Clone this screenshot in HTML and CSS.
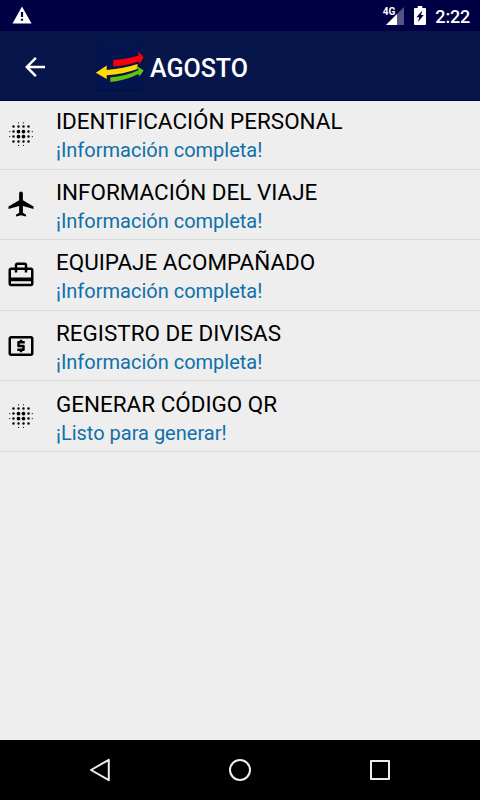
FILE: index.html
```html
<!DOCTYPE html>
<html lang="es">
<head>
    <meta charset="UTF-8">
    <meta name="viewport" content="width=device-width, initial-scale=1.0">
    <title>Agosto</title>
    <link rel="stylesheet" href="styles.css">
</head>
<body>
    <!-- Shared dotted icon -->
    <svg class="sprite" width="0" height="0">
        <symbol id="blur" viewBox="0 0 24 24">
            <g fill="none" stroke="#000" stroke-linecap="round">
                <path stroke-width="3" d="M10 10h0M14 10h0M10 14h0M14 14h0"/>
                <path stroke-width="2" d="M6 6h0M10 6h0M14 6h0M18 6h0M6 10h0M18 10h0M6 14h0M18 14h0M6 18h0M10 18h0M14 18h0M18 18h0"/>
                <path stroke-width="1" d="M10 3h0M14 3h0M3 10h0M3 14h0M21 10h0M21 14h0M10 21h0M14 21h0"/>
            </g>
        </symbol>
    </svg>

    <div class="screen">
        <div class="status-bar">
            <svg class="warning" width="20" height="18" viewBox="0 0 20 18">
                <path fill="#fff" d="M10 .5L19.5 17.5H.5z"/>
                <path fill="#000045" d="M8.9 6h2.2v5H8.9zM8.9 12.7h2.2v2.1H8.9z"/>
            </svg>
            <div class="status-right">
                <span class="network">4G</span>
                <svg class="signal" width="18" height="18" viewBox="0 0 18 18">
                    <path fill="#555386" d="M18 0v18H0z"/>
                    <path fill="#fff" d="M11 7v11H0z"/>
                </svg>
                <svg class="battery" width="12" height="19" viewBox="0 0 12 19">
                    <path fill="#fff" d="M3.7 0h4.6v2H11a1 1 0 0 1 1 1v15a1 1 0 0 1-1 1H1a1 1 0 0 1-1-1V3a1 1 0 0 1 1-1h2.7z"/>
                    <path fill="#000045" d="M8.3 4.6L7 9h2.8L4 16l1.2-4.8H2.4z"/>
                </svg>
                <span class="clock">2:22</span>
            </div>
        </div>

        <header class="app-bar">
            <svg class="back" width="30" height="30" viewBox="0 0 24 24">
                <path fill="#fff" d="M20 11H7.83l5.59-5.59L12 4l-8 8 8 8 1.41-1.41L7.83 13H20v-2z"/>
            </svg>
            <svg class="logo" width="50" height="50" viewBox="0 0 50 50">
                <rect class="logo-tile" x="1" y="2" width="47" height="46" rx="3"/>
                <path fill="#fb0007" d="M18.3 18.1Q32 17.2 43.6 13.4L43.3 9.5 48.7 15.2 44.4 21.9 43.6 19.4Q32 23.4 18.3 24.5z"/>
                <path fill="#ffd900" d="M.8 30.8L11.7 23.4V27.9Q29 26.4 42.5 21.9V27.1Q28 32.3 11.7 33.2V37z"/>
                <path fill="#63c20b" d="M15.2 35.5Q30 34.4 43.4 28.3L42.6 24.6 48.7 28.5 44.4 34.6 43.6 32Q30 38.7 15.4 40z"/>
            </svg>
            <h1 class="title">AGOSTO</h1>
        </header>

        <main class="list">
            <div class="item">
                <svg class="icon"><use href="#blur"/></svg>
                <div class="text">
                    <h2>IDENTIFICACIÓN PERSONAL</h2>
                    <p>¡Información completa!</p>
                </div>
            </div>
            <div class="item">
                <svg class="icon" viewBox="0 0 24 24"><path d="M22 16v-2l-8.5-5V3.5C13.5 2.67 12.83 2 12 2s-1.5.67-1.5 1.5V9L2 14v2l8.5-2.5V19L8 20.5V22l4-1 4 1v-1.5L13.5 19v-5.5L22 16z"/></svg>
                <div class="text">
                    <h2>INFORMACIÓN DEL VIAJE</h2>
                    <p>¡Información completa!</p>
                </div>
            </div>
            <div class="item">
                <svg class="icon" viewBox="0 0 24 24"><path d="M20 6h-3V4c0-1.11-.89-2-2-2H9c-1.11 0-2 .89-2 2v2H4c-1.11 0-2 .89-2 2v11c0 1.11.89 2 2 2h16c1.11 0 2-.89 2-2V8c0-1.11-.89-2-2-2zM9 4h6v2H9V4zm11 15H4v-2h16v2zm0-5H4V8h3v2h2V8h6v2h2V8h3v6z"/></svg>
                <div class="text">
                    <h2>EQUIPAJE ACOMPAÑADO</h2>
                    <p>¡Información completa!</p>
                </div>
            </div>
            <div class="item">
                <svg class="icon" viewBox="0 0 24 24"><path d="M11 17h2v-1h1c.55 0 1-.45 1-1v-3c0-.55-.45-1-1-1h-3v-1h4V8h-2V7h-2v1h-1c-.55 0-1 .45-1 1v3c0 .55.45 1 1 1h3v1H9v2h2v1zm9-13H4c-1.11 0-1.99.89-1.99 2L2 18c0 1.11.89 2 2 2h16c1.11 0 2-.89 2-2V6c0-1.11-.89-2-2-2zm0 14H4V6h16v12z"/></svg>
                <div class="text">
                    <h2>REGISTRO DE DIVISAS</h2>
                    <p>¡Información completa!</p>
                </div>
            </div>
            <div class="item">
                <svg class="icon"><use href="#blur"/></svg>
                <div class="text">
                    <h2>GENERAR CÓDIGO QR</h2>
                    <p>¡Listo para generar!</p>
                </div>
            </div>
        </main>

        <nav class="nav-bar">
            <svg width="24" height="26" viewBox="0 0 24 26"><path d="M20.8 2.8v20.4L3 13z"/></svg>
            <svg width="24" height="26" viewBox="0 0 24 26"><circle cx="12" cy="13" r="10"/></svg>
            <svg width="24" height="26" viewBox="0 0 24 26"><path d="M3 4h18v18H3z"/></svg>
        </nav>
    </div>
</body>
</html>
```
FILE: styles.css
```css
* {
    box-sizing: border-box;
}
body {
    margin: 0;
    font-family: Roboto, "Liberation Sans", sans-serif;
    background-color: #eee;
}
h1, h2, p {
    margin: 0;
}
.sprite {
    display: block;
}
.screen {
    display: flex;
    flex-direction: column;
    width: 480px;
    height: 800px;
    overflow: hidden;
}

/* Status bar */
.status-bar {
    display: flex;
    justify-content: space-between;
    height: 31px;
    padding: 6px 10px 0 12px;
    background-color: #000045;
    color: #fff;
}
.status-right {
    display: flex;
    align-items: flex-start;
}
.network {
    font-size: 10px;
    font-weight: 700;
    line-height: 12px;
    margin-right: -9px;
}
.signal {
    margin: 1px 10px 0 0;
}
.battery {
    margin-right: 9px;
}
.clock {
    font-size: 18px;
    font-weight: 500;
    line-height: 21px;
    letter-spacing: -0.2px;
}

/* App bar */
.app-bar {
    display: flex;
    align-items: center;
    height: 70px;
    padding: 2px 0 0 20px;
    background-color: #06164b;
    border-bottom: 1px solid #000035;
    color: #fff;
}
.logo {
    margin-left: 45px;
}
.logo-tile {
    fill: #04144f;
    filter: drop-shadow(0 1px 1px #030f38);
}
.title {
    margin-left: 5px;
    padding-top: 4px;
    font-size: 25px;
    font-weight: 500;
    line-height: 30px;
}

/* List */
.list {
    flex: 1;
    margin-top: -2px;
    position: relative;
    z-index: -1;
}
.item {
    display: flex;
    align-items: center;
    height: 70.6px;
    padding-left: 6px;
    border-bottom: 1px solid #d9d9d9;
}
.icon {
    width: 30px;
    height: 30px;
}
.text {
    margin-left: 20px;
    padding-top: 5px;
}
.text h2 {
    margin-bottom: 2px;
    font-size: 22.45px;
    font-weight: 400;
    line-height: 26px;
    color: #000;
}
.text p {
    font-size: 20px;
    line-height: 28px;
    color: #1070aa;
}

/* Navigation bar */
.nav-bar {
    display: flex;
    justify-content: space-between;
    align-items: center;
    height: 60px;
    padding: 0 88px;
    background-color: #000;
}
.nav-bar svg {
    fill: none;
    stroke: #eee;
    stroke-width: 2;
    stroke-linejoin: round;
}
```
